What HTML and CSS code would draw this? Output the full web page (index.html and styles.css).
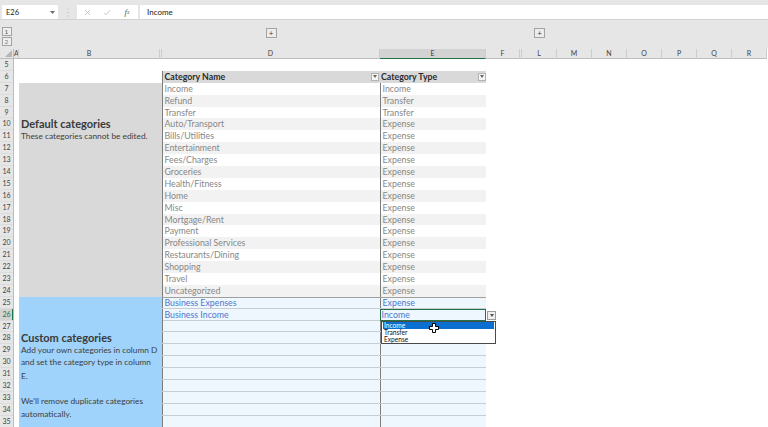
FILE: index.html
```html
<!DOCTYPE html>
<html>
<head>
<meta charset="utf-8">
<title>Categories</title>
<link rel="stylesheet" href="styles.css">
</head>
<body>
<div class="app">
  <div class="fbar">
    <div class="namebox"><span>E26</span><svg class="caret" width="5" height="3" viewBox="0 0 5 3"><path d="M0 0H5L2.5 3Z" fill="#6f6f6f"/></svg></div>
    <div class="grip"><svg width="2" height="9" viewBox="0 0 2 9"><circle cx="1" cy="1" r=".7" fill="#c2c2c2"/><circle cx="1" cy="4.5" r=".7" fill="#c2c2c2"/><circle cx="1" cy="8" r=".7" fill="#c2c2c2"/></svg></div>
    <div class="fxbox">
      <span class="fxbtn"><svg width="7" height="7" viewBox="0 0 7 7"><path d="M1 1L6 6M6 1L1 6" stroke="#c4c4c4" stroke-width=".9"/></svg></span>
      <span class="fxbtn"><svg width="8" height="7" viewBox="0 0 8 7"><path d="M1 3.8L3 5.8L7 1" stroke="#c4c4c4" stroke-width=".9" fill="none"/></svg></span>
      <span class="fxbtn fx"><i>f</i><sub>x</sub></span>
    </div>
    <div class="finput">Income</div>
  </div>

  <div class="outline">
    <div class="levels"><span class="lvl">1</span><span class="lvl l2">2</span></div>
    <span class="plus plus-d">+</span>
    <span class="plus plus-l">+</span>
  </div>

  <div class="sheet">
    <div class="ch corner"><svg width="7" height="7" viewBox="0 0 7 7"><path d="M7 0V7H0Z" fill="#b5b5b5"/></svg></div>
    <div class="ch">A</div>
    <div class="ch">B</div>
    <div class="ch"></div>
    <div class="ch">D</div>
    <div class="ch sel">E</div>
    <div class="ch">F</div>
    <div class="ch"></div>
    <div class="ch">L</div>
    <div class="ch">M</div>
    <div class="ch">N</div>
    <div class="ch">O</div>
    <div class="ch">P</div>
    <div class="ch">Q</div>
    <div class="ch">R</div>

    <div class="rowhdr">
      <div class="rn">5</div><div class="rn">6</div><div class="rn">7</div><div class="rn">8</div>
      <div class="rn">9</div><div class="rn">10</div><div class="rn">11</div><div class="rn">12</div>
      <div class="rn">13</div><div class="rn">14</div><div class="rn">15</div><div class="rn">16</div>
      <div class="rn">17</div><div class="rn">18</div><div class="rn">19</div><div class="rn">20</div>
      <div class="rn">21</div><div class="rn">22</div><div class="rn">23</div><div class="rn">24</div>
      <div class="rn">25</div><div class="rn act">26</div><div class="rn">27</div><div class="rn">28</div>
      <div class="rn">29</div><div class="rn">30</div><div class="rn">31</div><div class="rn">32</div>
      <div class="rn">33</div><div class="rn">34</div><div class="rn">35</div>
    </div>

    <div class="defbox">
      <h2 class="boxtitle">Default categories</h2>
      <p class="boxtext sub">These categories cannot be edited.</p>
    </div>

    <div class="custbox">
      <h2 class="boxtitle">Custom categories</h2>
      <p class="boxtext t1">Add your own categories in column D</p>
      <p class="boxtext t2">and set the category type in column</p>
      <p class="boxtext t3">E.</p>
      <p class="boxtext t4">We'll remove duplicate categories</p>
      <p class="boxtext t5">automatically.</p>
    </div>

    <div class="table">
      <div class="tr th">
        <div class="c d">Category Name<span class="fbtn"><svg width="4" height="3" viewBox="0 0 4 3"><path d="M0 0H4L2 3Z" fill="#666"/></svg></span></div>
        <div class="c e">Category Type<span class="fbtn"><svg width="4" height="3" viewBox="0 0 4 3"><path d="M0 0H4L2 3Z" fill="#666"/></svg></span></div>
      </div>
      <div class="tr"><div class="c d">Income</div><div class="c e">Income</div></div>
      <div class="tr alt"><div class="c d">Refund</div><div class="c e">Transfer</div></div>
      <div class="tr"><div class="c d">Transfer</div><div class="c e">Transfer</div></div>
      <div class="tr alt"><div class="c d">Auto/Transport</div><div class="c e">Expense</div></div>
      <div class="tr"><div class="c d">Bills/Utilities</div><div class="c e">Expense</div></div>
      <div class="tr alt"><div class="c d">Entertainment</div><div class="c e">Expense</div></div>
      <div class="tr"><div class="c d">Fees/Charges</div><div class="c e">Expense</div></div>
      <div class="tr alt"><div class="c d">Groceries</div><div class="c e">Expense</div></div>
      <div class="tr"><div class="c d">Health/Fitness</div><div class="c e">Expense</div></div>
      <div class="tr alt"><div class="c d">Home</div><div class="c e">Expense</div></div>
      <div class="tr"><div class="c d">Misc</div><div class="c e">Expense</div></div>
      <div class="tr alt"><div class="c d">Mortgage/Rent</div><div class="c e">Expense</div></div>
      <div class="tr"><div class="c d">Payment</div><div class="c e">Expense</div></div>
      <div class="tr alt"><div class="c d">Professional Services</div><div class="c e">Expense</div></div>
      <div class="tr"><div class="c d">Restaurants/Dining</div><div class="c e">Expense</div></div>
      <div class="tr alt"><div class="c d">Shopping</div><div class="c e">Expense</div></div>
      <div class="tr"><div class="c d">Travel</div><div class="c e">Expense</div></div>
      <div class="tr alt"><div class="c d">Uncategorized</div><div class="c e">Expense</div></div>

      <div class="tr cu first"><div class="c d">Business Expenses</div><div class="c e">Expense</div></div>
      <div class="tr cu">
        <div class="c d">Business Income</div>
        <div class="c e act">Income
          <span class="ddbtn"><svg width="4" height="3" viewBox="0 0 4 3"><path d="M0 0H4L2 3Z" fill="#555"/></svg></span>
          <div class="ddlist">
            <div class="ddi on">Income</div>
            <div class="ddi">Transfer</div>
            <div class="ddi">Expense</div>
            <svg class="cursor" width="10" height="10" viewBox="0 0 10 10"><path d="M3.5 .5H6.5V3.5H9.5V6.5H6.5V9.5H3.5V6.5H.5V3.5H3.5Z" fill="#fff" stroke="#000" stroke-width="1"/></svg>
          </div>
        </div>
      </div>
      <div class="tr cu"><div class="c d"></div><div class="c e"></div></div>
      <div class="tr cu"><div class="c d"></div><div class="c e"></div></div>
      <div class="tr cu"><div class="c d"></div><div class="c e"></div></div>
      <div class="tr cu"><div class="c d"></div><div class="c e"></div></div>
      <div class="tr cu"><div class="c d"></div><div class="c e"></div></div>
      <div class="tr cu"><div class="c d"></div><div class="c e"></div></div>
      <div class="tr cu"><div class="c d"></div><div class="c e"></div></div>
      <div class="tr cu"><div class="c d"></div><div class="c e"></div></div>
      <div class="tr cu"><div class="c d"></div><div class="c e"></div></div>
    </div>
  </div>
</div>
</body>
</html>
```

FILE: styles.css
```css
* { box-sizing: border-box; margin: 0; padding: 0; }
html, body { width: 768px; height: 427px; overflow: hidden; background: #fff; }
body { font-family: Lato, "Open Sans", sans-serif; color: #333; }

.app { width: 768px; height: 427px; overflow: hidden; }

/* formula bar */
.fbar { height: 20px; background: #e6e6e6; border-bottom: 1px solid #d2d2d2; display: flex; padding: 5px 0 0 2px; }
.namebox { width: 56px; height: 14px; background: #fff; display: flex; align-items: center; justify-content: space-between; padding: 0 3px 0 4px; font-size: 7.5px; color: #222; }
.caret { margin-top: 1px; }
.grip { width: 19px; display: flex; align-items: center; justify-content: center; height: 14px; }
.fxbox { width: 61px; height: 14px; background: #fff; display: flex; }
.fxbtn { width: 20px; display: flex; align-items: center; justify-content: center; }
.fx { font-family: "Liberation Serif", serif; font-size: 8.5px; color: #555; }
.fx sub { font-size: 5.5px; vertical-align: -1px; font-style: italic; }
.finput { flex: 1; margin-left: 2px; height: 14px; background: #fff; padding-left: 7px; font-size: 8px; line-height: 14px; color: #222; }

/* outline bar */
.outline { height: 29px; background: #e6e6e6; display: grid; grid-template-columns: 14px 5px 141px 2px 218px 106px 34px 2px repeat(7, 35px); }
.levels { grid-column: 1; display: flex; flex-direction: column; gap: 1.5px; padding: 6.7px 0 0 1.5px; }
.lvl { width: 10px; height: 9px; border: 1px solid #a3a3a3; background: #efefef; font-size: 6.5px; line-height: 7px; text-align: center; color: #555; }
.lvl.l2 { color: #7a7a7a; }
.plus { align-self: start; justify-self: center; margin-top: 8px; width: 11px; height: 10px; border: 1px solid #a3a3a3; background: #ececec; font-size: 8px; line-height: 8px; text-align: center; color: #444; }
.plus-d { grid-column: 5; }
.plus-l { grid-column: 9; }

/* sheet */
.sheet { display: grid; grid-template-columns: 14px 5px 141px 2px 218px 106px 34px 2px repeat(7, 35px); grid-template-rows: 10px repeat(31, 11.9px); background: #fff; }
.ch { background: #e6e6e6; border-right: 1px solid #cdcdcd; border-bottom: 1px solid #bcbcbc; font-size: 7px; line-height: 9px; text-align: center; color: #444; overflow: hidden; }
.ch.corner { display: flex; align-items: flex-end; justify-content: flex-end; padding: 0 1px 1px 0; border-right-color: #bcbcbc; }
.ch.sel { background: #d3d3d3; border-bottom: 1px solid #217346; color: #333; }

.rowhdr { grid-column: 1; grid-row: 2 / 33; display: flex; flex-direction: column; background: #e6e6e6; border-right: 1px solid #bcbcbc; }
.rn { height: 11.9px; flex: none; font-size: 7px; line-height: 11.9px; text-align: center; color: #444; border-bottom: 1px solid #dcdcdc; }
.rn.act { background: #d3d3d3; color: #217346; box-shadow: inset -1px 0 0 #217346; }

.defbox { grid-column: 3 / 5; grid-row: 4 / 22; background: #d9d9d9; padding: 33.9px 0 0 2px; color: #404040; }
.custbox { grid-column: 3 / 5; grid-row: 22 / 33; background: #9fd3fb; padding: 34px 0 0 2px; color: #404040; }
.boxtitle { font-size: 11px; line-height: 13px; font-weight: 700; color: #3a3a3a; }
.boxtext { font-size: 8.3px; line-height: 11.6px; white-space: nowrap; }
.sub { margin-top: 1.6px; line-height: 11px; }
.t1 { margin-top: 1.4px; }
.t3 { margin-top: 3.1px; }
.t4 { margin-top: 13.4px; }
.t5 { margin-top: 0.7px; }

.table { grid-column: 5 / 7; grid-row: 3 / 33; display: flex; flex-direction: column; }
.tr { height: 11.9px; flex: none; display: grid; grid-template-columns: 218px 106px; background: #fff; }
.tr.alt { background: #f2f2f2; }
.c { font-size: 8.8px; line-height: 11.4px; padding-left: 1.5px; white-space: nowrap; overflow: hidden; color: #878787; border-left: 1px solid #7d7d7d; }
.th { background: #d9d9d9; }
.th .c { position: relative; font-weight: 700; color: #2b2b2b; overflow: visible; line-height: 12.4px; }
.th .e { border-left: none; padding-left: 1px; }
.fbtn { position: absolute; right: 1px; top: 2px; width: 8px; height: 8px; border: 1px solid #b3b3b3; background: #f5f5f5; display: flex; align-items: center; justify-content: center; }
.th .e .fbtn { right: 0.5px; }

.tr.cu { background: #eef6fe; border-bottom: 1px solid #c9ccd0; }
.tr.cu.first { border-top: 1px solid #a0a0a0; }
.tr.cu .c { color: #4a78cf; line-height: 11.4px; }
.tr.cu.first .c { line-height: 10.6px; }

.c.act { position: relative; overflow: visible; border: 1px solid #217346; line-height: 10.4px !important; padding-left: 0.5px; }
.ddbtn { position: absolute; left: calc(100% + 2px); top: 1px; width: 9.3px; height: 9.3px; border: 1px solid #9c9c9c; background: #efefef; display: flex; align-items: center; justify-content: center; }
.ddlist { position: absolute; left: 0; top: 11px; width: 115px; height: 23.5px; background: #fff; border: 1px solid #4a4a4a; padding: 0 1px; z-index: 5; }
.ddi { height: 7.2px; font-size: 6.6px; line-height: 7.2px; color: #111; padding-left: 1px; }
.ddi.on { background: #0a6fd1; color: #fff; }
.cursor { position: absolute; left: 47px; top: 1.5px; }
```
